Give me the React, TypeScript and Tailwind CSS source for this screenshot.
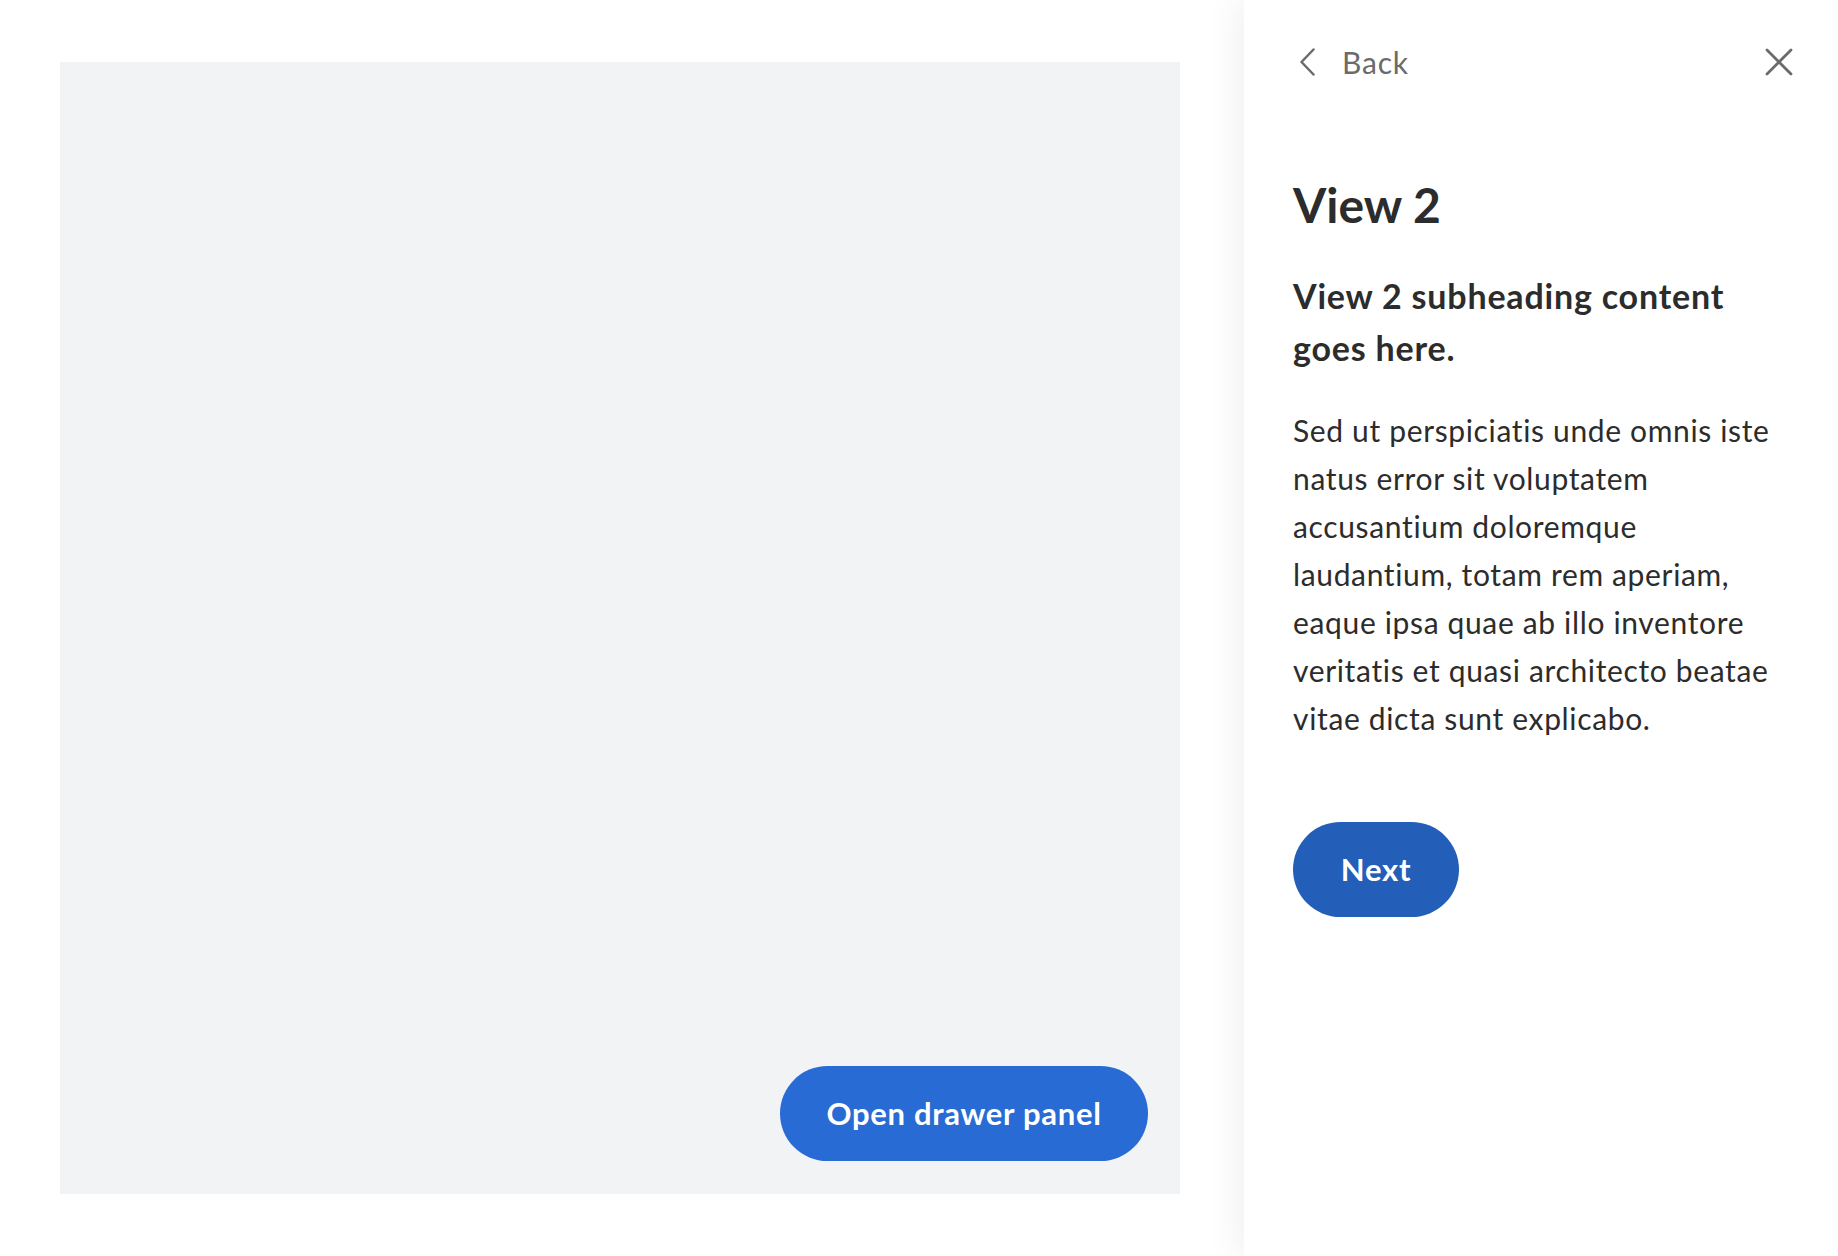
import React from "react";

export default function App() {
  return (
    <div
      className="flex w-[1838px] h-[1256px] bg-white overflow-hidden [font-variant-ligatures:no-common-ligatures]"
      style={{ fontFamily: "Lato, 'Noto Sans', sans-serif" }}
    >
      <main className="w-[1244px] shrink-0 pl-[60px] pr-[64px] pt-[62px] pb-[62px]">
        <div className="w-full h-full bg-[#f2f3f5] flex items-end justify-end pr-[32px] pb-[33px]">
          <button className="h-[95px] w-[368px] rounded-full bg-[#286bd4] text-white text-[31px] tracking-[0.7px] font-bold leading-none">
            Open drawer panel
          </button>
        </div>
      </main>
      <aside className="flex-1 bg-white shadow-[-10px_0_30px_rgba(0,0,0,0.05)] pl-[49px] pr-[45px] pt-[44px] relative">
        <div className="flex items-center justify-between h-[36px]">
          <button className="flex items-center gap-[27px] pl-[6px] text-[#6b6b6b] text-[30px] tracking-[0.8px] leading-[36px]">
            <svg width="16" height="28" viewBox="0 0 16 28" fill="none">
              <path d="M14.5 1.5 L2.5 14 L14.5 26.5" stroke="#6b6b6b" strokeWidth="2.5" strokeLinecap="round" strokeLinejoin="round" />
            </svg>
            <span>Back</span>
          </button>
          <button className="w-[28px] h-[28px] flex items-center justify-center">
            <svg width="28" height="28" viewBox="0 0 28 28" fill="none">
              <path d="M2 2 L26 26 M26 2 L2 26" stroke="#6b6b6b" strokeWidth="2.8" strokeLinecap="round" />
            </svg>
          </button>
        </div>
        <div className="mt-[96px] w-[494px] text-[#2c2c2c]">
          <h1 className="text-[48px] leading-[57.6px] font-bold">View 2</h1>
          <h2 className="mt-[36px] text-[34px] tracking-[0.8px] leading-[52px] font-bold">
            View 2 subheading content goes here.
          </h2>
          <p className="mt-[32px] text-[30px] tracking-[0.65px] leading-[48px]">
            Sed ut perspiciatis unde omnis iste natus error sit voluptatem accusantium doloremque laudantium,
            totam rem aperiam, eaque ipsa quae ab illo inventore veritatis et quasi architecto beatae vitae dicta
            sunt explicabo.
          </p>
          <button className="mt-[80px] h-[95px] w-[166px] rounded-full bg-[#235eb8] text-white text-[31px] tracking-[0.8px] font-bold leading-none">
            Next
          </button>
        </div>
      </aside>
    </div>
  );
}
